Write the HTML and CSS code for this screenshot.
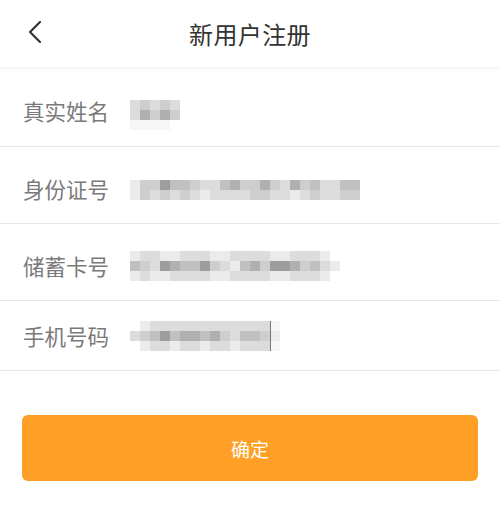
FILE: index.html
```html
<!DOCTYPE html>
<html lang="zh-CN">
<head>
<meta charset="utf-8">
<title>新用户注册</title>
<link rel="stylesheet" href="styles.css">
</head>
<body>
<header class="topbar">
  <span class="back">
    <svg width="16" height="24" viewBox="0 0 16 24"><path d="M13 2 L3 12 L13 22" fill="none" stroke="#333" stroke-width="2.2" stroke-linecap="round" stroke-linejoin="round"/></svg>
  </span>
  <h1 class="title">新用户注册</h1>
</header>
<main class="form">
  <div class="row r1">
    <span class="label">真实姓名</span>
    <div class="mosaic m5">
      <i class="b"></i><i class="c"></i><i class="b"></i><i class="c"></i><i class="b"></i>
      <i class="b"></i><i class="e"></i><i class="c"></i><i class="e"></i><i class="c"></i>
      <i class="z"></i><i class="z"></i><i class="z"></i><i class="z"></i><i></i>
    </div>
  </div>
  <div class="row r2">
    <span class="label">身份证号</span>
    <div class="mosaic m23">
      <i class="a"></i><i class="c"></i><i class="c"></i><i class="f"></i><i class="d"></i><i class="d"></i><i class="c"></i><i class="b"></i><i class="b"></i><i class="d"></i><i class="e"></i><i class="c"></i><i class="c"></i><i class="e"></i><i class="c"></i><i class="b"></i><i class="e"></i><i class="c"></i><i class="d"></i><i class="b"></i><i class="b"></i><i class="d"></i><i class="d"></i>
      <i class="a"></i><i class="c"></i><i class="b"></i><i class="c"></i><i class="b"></i><i class="c"></i><i class="b"></i><i class="a"></i><i class="b"></i><i class="b"></i><i class="b"></i><i class="b"></i><i class="c"></i><i class="c"></i><i class="b"></i><i class="b"></i><i class="a"></i><i class="b"></i><i class="c"></i><i class="b"></i><i class="b"></i><i class="c"></i><i class="c"></i>
    </div>
  </div>
  <div class="row r3">
    <span class="label">储蓄卡号</span>
    <div class="mosaic m21">
      <i class="a"></i><i class="b"></i><i class="b"></i><i class="a"></i><i class="a"></i><i class="b"></i><i class="b"></i><i class="b"></i><i class="a"></i><i class="a"></i><i class="b"></i><i class="b"></i><i class="b"></i><i class="b"></i><i class="a"></i><i class="a"></i><i class="b"></i><i class="b"></i><i class="b"></i><i class="a"></i><i></i>
      <i class="d"></i><i class="c"></i><i class="b"></i><i class="f"></i><i class="e"></i><i class="d"></i><i class="d"></i><i class="f"></i><i class="c"></i><i class="b"></i><i class="a"></i><i class="d"></i><i class="e"></i><i class="c"></i><i class="f"></i><i class="f"></i><i class="e"></i><i class="c"></i><i class="d"></i><i class="b"></i><i class="a"></i>
      <i class="a"></i><i class="b"></i><i class="a"></i><i class="a"></i><i class="b"></i><i class="b"></i><i class="b"></i><i class="b"></i><i class="a"></i><i class="a"></i><i class="b"></i><i class="b"></i><i class="b"></i><i class="b"></i><i class="a"></i><i class="a"></i><i class="b"></i><i class="b"></i><i class="b"></i><i class="a"></i><i></i>
    </div>
  </div>
  <div class="row r4">
    <span class="label">手机号码</span>
    <div class="mosaic m15">
      <i></i><i class="a"></i><i class="b"></i><i class="b"></i><i class="b"></i><i class="b"></i><i class="b"></i><i class="b"></i><i class="b"></i><i class="b"></i><i class="b"></i><i class="b"></i><i class="b"></i><i class="b"></i><i class="z"></i>
      <i class="b"></i><i class="c"></i><i class="d"></i><i class="f"></i><i class="d"></i><i class="e"></i><i class="e"></i><i class="d"></i><i class="e"></i><i class="c"></i><i class="b"></i><i class="d"></i><i class="d"></i><i class="c"></i><i class="a"></i>
      <i></i><i class="a"></i><i class="b"></i><i class="b"></i><i class="a"></i><i class="b"></i><i class="b"></i><i class="a"></i><i class="b"></i><i class="b"></i><i class="a"></i><i class="b"></i><i class="b"></i><i class="b"></i><i class="z"></i>
      <span class="caret"></span>
    </div>
  </div>
</main>
<div class="actions">
  <button class="submit" type="button">确定</button>
</div>
</body>
</html>
```

FILE: styles.css
```css
html, body {
  margin: 0;
  padding: 0;
  background: #ffffff;
}

body {
  font-family: "Noto Sans CJK SC", "Noto Sans", sans-serif;
  color: #333333;
}

.topbar {
  position: relative;
  z-index: 2;
  height: 67px;
  display: flex;
  align-items: center;
  justify-content: center;
  background: #ffffff;
  box-shadow: 0 2px 4px rgba(0, 0, 0, 0.05);
}

.back {
  position: absolute;
  left: 27px;
  top: 20px;
  width: 16px;
  height: 24px;
  display: block;
}

.back svg {
  display: block;
}

.title {
  margin: 0;
  font-size: 24px;
  font-weight: 400;
  color: #333333;
  line-height: 1;
  letter-spacing: 0.4px;
}

.form {
  display: flex;
  flex-direction: column;
}

.row {
  display: flex;
  align-items: center;
  box-sizing: border-box;
  border-bottom: 1px solid #e6e6e6;
  padding-left: 23px;
}

.r1 { height: 80px; padding-top: 9px; }
.r2 { height: 77px; padding-top: 7px; }
.r3 { height: 77px; padding-top: 8px; }
.r4 { height: 70px; }

.label {
  width: 107px;
  flex: none;
  font-size: 21.5px;
  color: #7a7a7a;
  line-height: 1;
}

.mosaic {
  position: relative;
  display: grid;
  grid-auto-rows: 10px;
  filter: blur(0.6px);
}

.m5 { grid-template-columns: repeat(5, 10px); margin-top: 8px; }
.m23 { grid-template-columns: repeat(23, 10px); margin-top: 2px; }
.m21 { grid-template-columns: repeat(21, 10px); }
.m15 { grid-template-columns: repeat(15, 10px); }

.mosaic i {
  display: block;
  width: 10px;
  height: 10px;
}

.mosaic .z { background: #f6f6f6; }
.mosaic .a { background: #ebebeb; }
.mosaic .b { background: #dcdcdc; }
.mosaic .c { background: #cecece; }
.mosaic .d { background: #c0c0c0; }
.mosaic .e { background: #b0b0b0; }
.mosaic .f { background: #9d9d9d; }

.caret {
  position: absolute;
  left: 140px;
  top: 0;
  width: 1px;
  height: 30px;
  background: #777777;
}

.actions {
  padding: 44px 22px 0;
}

.submit {
  display: block;
  width: 100%;
  height: 66px;
  border: 0;
  border-radius: 6px;
  background: #ff9f26;
  color: #ffffff;
  font-family: "Noto Sans CJK SC", "Noto Sans", sans-serif;
  font-size: 19px;
  padding: 0;
}
```
